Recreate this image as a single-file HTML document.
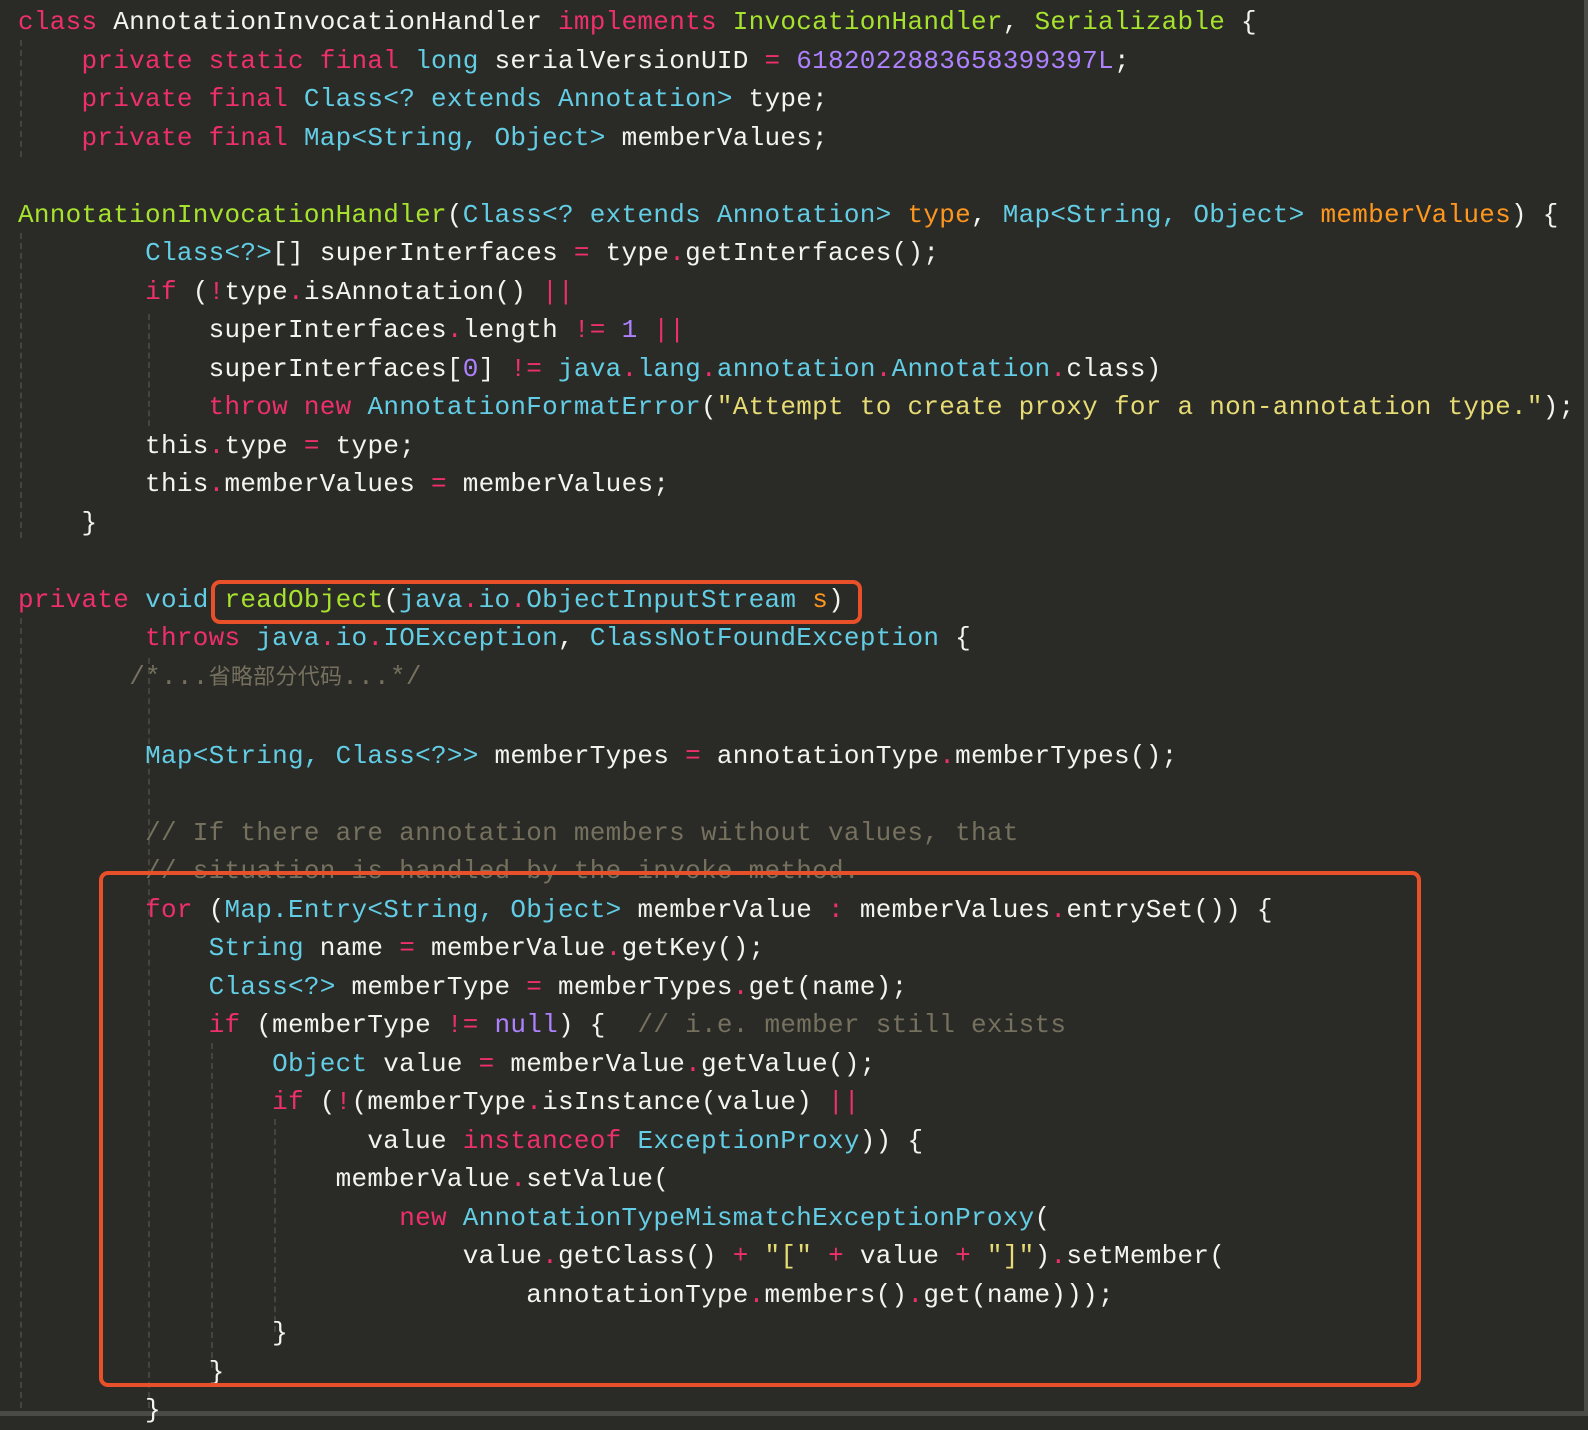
<!DOCTYPE html>
<html><head><meta charset="utf-8">
<style>
html,body{margin:0;padding:0;}
body{width:1588px;height:1416px;background:#2a2a26;overflow:hidden;position:relative;}
pre{position:absolute;left:18px;top:3px;margin:0;font-family:"Liberation Mono","Noto Sans CJK SC",monospace;font-size:26px;line-height:38.5px;color:#f4f4ee;letter-spacing:0.28px;}
.k{color:#ee2f6e}.t{color:#62cde4}.f{color:#a6e22e}.o{color:#fd971f}.n{color:#ae81ff}.s{color:#e6db74}.c{color:#75715e}
.cj{font-size:22px}
.box{position:absolute;border:4px solid #e8502a;border-radius:9px;box-sizing:border-box;}
.g{position:absolute;width:0;border-left:2px dashed #45453f;}
.strip{position:absolute;background:#4a4a46;}
</style></head><body>
<div class="g" style="left:20px;top:40px;height:117px"></div>
<div class="g" style="left:20px;top:233px;height:305px"></div>
<div class="g" style="left:20px;top:618px;height:790px"></div>
<div class="g" style="left:148px;top:314px;height:112px"></div>
<div class="g" style="left:148px;top:658px;height:750px"></div>
<div class="g" style="left:211px;top:1043px;height:325px"></div>
<div class="g" style="left:274px;top:1119px;height:213px"></div>
<div class="strip" style="left:1584px;top:0;width:4px;height:1416px"></div>
<div class="strip" style="left:0;top:1411px;width:1588px;height:5px"></div>
<pre><span class="k">class</span> AnnotationInvocationHandler <span class="k">implements</span> <span class="f">InvocationHandler</span>, <span class="f">Serializable</span> {
    <span class="k">private static final</span> <span class="t">long</span> serialVersionUID <span class="k">=</span> <span class="n">6182022883658399397L</span>;
    <span class="k">private final</span> <span class="t">Class&lt;? extends Annotation&gt;</span> type;
    <span class="k">private final</span> <span class="t">Map&lt;String, Object&gt;</span> memberValues;

<span class="f">AnnotationInvocationHandler</span>(<span class="t">Class&lt;? extends Annotation&gt;</span> <span class="o">type</span>, <span class="t">Map&lt;String, Object&gt;</span> <span class="o">memberValues</span>) {
        <span class="t">Class&lt;?&gt;</span>[] superInterfaces <span class="k">=</span> type<span class="k">.</span>getInterfaces();
        <span class="k">if</span> (<span class="k">!</span>type<span class="k">.</span>isAnnotation() <span class="k">||</span>
            superInterfaces<span class="k">.</span>length <span class="k">!=</span> <span class="n">1</span> <span class="k">||</span>
            superInterfaces[<span class="n">0</span>] <span class="k">!=</span> <span class="t">java</span><span class="k">.</span><span class="t">lang</span><span class="k">.</span><span class="t">annotation</span><span class="k">.</span><span class="t">Annotation</span><span class="k">.</span>class)
            <span class="k">throw new</span> <span class="t">AnnotationFormatError</span>(<span class="s">"Attempt to create proxy for a non-annotation type."</span>);
        this<span class="k">.</span>type <span class="k">=</span> type;
        this<span class="k">.</span>memberValues <span class="k">=</span> memberValues;
    }

<span class="k">private</span> <span class="t">void</span> <span class="f">readObject</span>(<span class="t">java</span><span class="k">.</span><span class="t">io</span><span class="k">.</span><span class="t">ObjectInputStream</span> <span class="o">s</span>)
        <span class="k">throws</span> <span class="t">java</span><span class="k">.</span><span class="t">io</span><span class="k">.</span><span class="t">IOException</span>, <span class="t">ClassNotFoundException</span> {
       <span class="c">/*...<span class="cj">省略部分代码</span>...*/</span>

        <span class="t">Map&lt;String, Class&lt;?&gt;&gt;</span> memberTypes <span class="k">=</span> annotationType<span class="k">.</span>memberTypes();

        <span class="c">// If there are annotation members without values, that</span>
        <span class="c">// situation is handled by the invoke method.</span>
        <span class="k">for</span> (<span class="t">Map.Entry&lt;String, Object&gt;</span> memberValue <span class="k">:</span> memberValues<span class="k">.</span>entrySet()) {
            <span class="t">String</span> name <span class="k">=</span> memberValue<span class="k">.</span>getKey();
            <span class="t">Class&lt;?&gt;</span> memberType <span class="k">=</span> memberTypes<span class="k">.</span>get(name);
            <span class="k">if</span> (memberType <span class="k">!=</span> <span class="n">null</span>) {  <span class="c">// i.e. member still exists</span>
                <span class="t">Object</span> value <span class="k">=</span> memberValue<span class="k">.</span>getValue();
                <span class="k">if</span> (<span class="k">!</span>(memberType<span class="k">.</span>isInstance(value) <span class="k">||</span>
                      value <span class="k">instanceof</span> <span class="t">ExceptionProxy</span>)) {
                    memberValue<span class="k">.</span>setValue(
                        <span class="k">new</span> <span class="t">AnnotationTypeMismatchExceptionProxy</span>(
                            value<span class="k">.</span>getClass() <span class="k">+</span> <span class="s">"["</span> <span class="k">+</span> value <span class="k">+</span> <span class="s">"]"</span>)<span class="k">.</span>setMember(
                                annotationType<span class="k">.</span>members()<span class="k">.</span>get(name)));
                }
            }
        }
</pre>
<div class="box" style="left:211px;top:580px;width:651px;height:44px"></div>
<div class="box" style="left:99px;top:871px;width:1322px;height:516px"></div>
</body></html>
